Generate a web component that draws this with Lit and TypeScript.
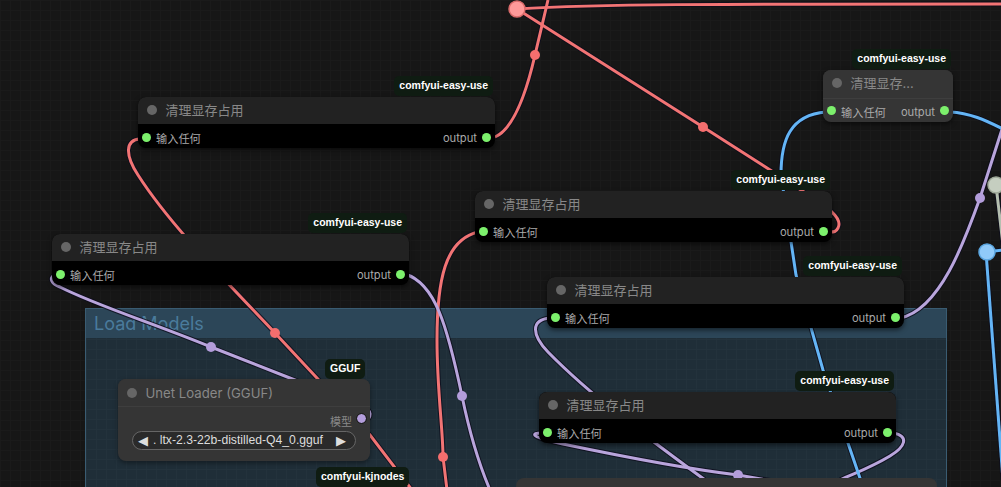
import { LitElement, html, css, svg } from "lit";
import { customElement } from "lit/decorators.js";

type NodeData = {
  x: number; y: number; w: number; title: string; badge: string;
  light?: boolean;
};

const clearTitle = "清理显存占用";
const nodes: NodeData[] = [
  { x: 138, y: 97, w: 357, title: clearTitle, badge: "comfyui-easy-use" },
  { x: 52, y: 234, w: 357, title: clearTitle, badge: "comfyui-easy-use" },
  { x: 475, y: 191, w: 357, title: clearTitle, badge: "comfyui-easy-use" },
  { x: 823, y: 70, w: 130, title: "清理显存...", badge: "comfyui-easy-use", light: true },
  { x: 547, y: 277, w: 357, title: clearTitle, badge: "comfyui-easy-use" },
  { x: 539, y: 392, w: 357, title: clearTitle, badge: "comfyui-easy-use" },
];

const RED = "#f27474";
const PURPLE = "#b9a5dc";
const BLUE = "#64b5f6";

const wires: { d: string; c: string }[] = [
  { c: RED, d: "M517 9 C 600 4, 700 4, 1001 4" },
  { c: RED, d: "M495 137 C 515 128, 527 90, 535 55 L 548 0" },
  { c: RED, d: "M517 9 L 703 127 L 792 184 C 815 200, 845 215, 838 228 C 836 232, 834 232, 830 232" },
  { c: RED, d: "M140 139 C 125 140, 125 155, 138 175 C 170 225, 225 280, 275 333 L 330 392 L 370 435 L 412 490" },
  { c: RED, d: "M478 232 C 445 240, 437 280, 437 340 C 437 390, 443 430, 443 457 L 447 490" },
  { c: PURPLE, d: "M55 275 C 48 278, 52 284, 60 287 C 95 305, 150 322, 211 347 L 300 382 C 340 398, 371 405, 370 414 C 370 418, 368 419, 366 419" },
  { c: PURPLE, d: "M405 274 C 435 283, 447 325, 462 396 C 470 435, 478 462, 490 490" },
  { c: PURPLE, d: "M550 318 C 530 320, 532 335, 548 352 C 590 395, 650 440, 712 485" },
  { c: PURPLE, d: "M542 433 C 530 433, 530 437, 563 444 C 620 456, 680 468, 738 475 L 790 484" },
  { c: PURPLE, d: "M893 433 C 910 436, 905 447, 890 456 C 870 468, 855 473, 840 480" },
  { c: PURPLE, d: "M900 318 C 940 310, 965 240, 980 198 L 1005 120" },
  { c: BLUE, d: "M826 112 C 790 115, 781 140, 781 175 L 796 275 L 823 370 L 862 484" },
  { c: BLUE, d: "M950 112 C 970 113, 985 120, 1003 129" },
  { c: BLUE, d: "M986 252 L 1003 480" },
  { c: BLUE, d: "M986 252 L 1003 250" },
  { c: "#b5bfb0", d: "M996 185 L 1003 245" },
];

const dots: { x: number; y: number; r: number; c: string; s?: string }[] = [
  { x: 535, y: 55, r: 5, c: "#f56e6e" },
  { x: 703, y: 127, r: 5, c: "#f56e6e" },
  { x: 275, y: 333, r: 5, c: "#f56e6e" },
  { x: 443, y: 457, r: 5, c: "#f56e6e" },
  { x: 211, y: 347, r: 5, c: "#b39ddb" },
  { x: 462, y: 396, r: 5, c: "#b39ddb" },
  { x: 980, y: 198, r: 5, c: "#b39ddb" },
  { x: 738, y: 475, r: 5, c: "#b39ddb" },
  { x: 517, y: 9, r: 8, c: "#ff9a9a", s: "#d96a6a" },
  { x: 987, y: 252, r: 8, c: "#90caf9", s: "#5ba6e0" },
  { x: 996, y: 185, r: 8, c: "#c5cec0", s: "#9ea898" },
];

@customElement("app-root")
export class AppRoot extends LitElement {
  static styles = css`
    :host { display: block; width: 1001px; height: 487px; overflow: hidden; }
    * { box-sizing: border-box; }
    .canvas {
      position: relative; width: 1001px; height: 487px; overflow: hidden;
      background-color: #161616;
      background-image:
        linear-gradient(#1a1a1a 1px, transparent 1px),
        linear-gradient(90deg, #1a1a1a 1px, transparent 1px),
        linear-gradient(#121212 1px, transparent 1px),
        linear-gradient(90deg, #121212 1px, transparent 1px);
      background-size: 10px 10px, 10px 10px, 70px 70px, 70px 70px;
      font-family: Inter, "Noto Sans CJK SC", sans-serif;
    }
    .group {
      position: absolute; left: 85px; top: 308px; width: 862px; height: 179px;
      border: 1px solid #3a5c72; border-bottom: 0;
      background-color: #1f2e38;
      background-image:
        linear-gradient(#23323c 1px, transparent 1px),
        linear-gradient(90deg, #23323c 1px, transparent 1px);
      background-size: 10px 10px;
    }
    .group-title {
      height: 29px; padding-left: 8px; background: #2c4658;
      color: #4a7b9c; font-size: 18px; line-height: 29px;
    }
    svg.wires { position: absolute; inset: 0; width: 1001px; height: 487px; }
    .node {
      position: absolute; display: flex; flex-direction: column;
      height: 51px; border-radius: 8px; background: #000;
      box-shadow: 0 2px 5px rgba(0,0,0,.55);
    }
    .node.light { background: #353535; height: 52px; }
    .head {
      display: flex; align-items: center; gap: 8.5px; height: 27px; padding: 0 0 3px 9px;
      background: #222; border-radius: 8px 8px 0 0;
      color: #888; font-size: 13px; flex: none;
    }
    .light .head { background: #353535; height: 29px; border-bottom: 1px solid #3e3e3e; }
    .lamp { width: 10px; height: 10px; border-radius: 50%; background: #666; flex: none; margin-top: 1px; }
    .row {
      display: flex; align-items: center; justify-content: space-between;
      flex: 1; padding: 2px 4px 0; color: #aaa; font-size: 11.2px;
    }
    .light .row { padding-top: 0; }
    .slot { display: flex; align-items: center; gap: 5px; }
    .slot > span:not(.pin) { padding-top: 2px; }
    .pin { width: 9px; height: 9px; border-radius: 50%; background: #7cf06c; flex: none; }
    .badge {
      position: absolute; bottom: calc(100% + 1px); right: 2px; height: 20px;
      padding: 0 5px; border-radius: 5px;
      background: #0f1c12; color: #fff;
      font: 700 10.5px/19px "Liberation Sans", sans-serif; white-space: nowrap;
    }
    .badge.free { bottom: auto; right: auto; }
    .gguf { left: 325px; top: 359px; }
    .kj { left: 316px; top: 467px; }
    .unet {
      position: absolute; left: 118px; top: 379px; width: 252px; height: 82px;
      display: flex; flex-direction: column;
      background: #353535; border-radius: 8px; box-shadow: 0 2px 5px rgba(0,0,0,.4);
    }
    .unet .head { background: #353535; height: 28px; border-bottom: 1px solid #3e3e3e; padding-bottom: 0; font-size: 13.2px; }
    .unet-out {
      display: flex; align-items: center; justify-content: flex-end; gap: 5px;
      height: 24px; padding: 0 4px 0 0; color: #888; font-size: 11px;
    }
    .unet-out > span:first-child { padding-top: 3px; }
    .unet-out .pin { background: #b39ddb; outline: 1px solid #1c1c1c; margin-bottom: 1px; }
    .combo {
      display: flex; align-items: center; justify-content: space-between;
      margin: 0 14px; height: 19px; padding: 0 9px 0 5px;
      border: 1px solid #666; border-radius: 10px; background: #2a2a2a;
      color: #ddd; font: 12.2px/17px "Liberation Sans", sans-serif;
    }
    .combo-text { margin-right: 8px; }
    .arrow { font-size: 13px; color: #ddd; font-family: "DejaVu Sans", sans-serif; }
    .clipped {
      position: absolute; left: 516px; top: 478px; width: 421px; height: 30px;
      display: flex; align-items: flex-start; padding: 7px 0 0 47px;
      background: #353535; border-radius: 8px; color: #888; font-size: 13px;
    }
  `;

  private renderNode(n: NodeData) {
    return html`
      <div class="node ${n.light ? "light" : ""}" style="left:${n.x}px;top:${n.y}px;width:${n.w}px">
        <div class="badge">${n.badge}</div>
        <div class="head"><span class="lamp"></span><span>${n.title}</span></div>
        <div class="row">
          <span class="slot"><span class="pin"></span><span>输入任何</span></span>
          <span class="slot"><span>output</span><span class="pin"></span></span>
        </div>
      </div>`;
  }

  render() {
    return html`
      <div class="canvas">
        <div class="group"><div class="group-title">Load Models</div></div>
        <svg class="wires" viewBox="0 0 1001 487" fill="none">
          ${wires.map((w) => svg`<path d=${w.d} stroke="#0c0c1c" stroke-opacity=".8" stroke-width="5"/>`)}
          ${wires.map((w) => svg`<path d=${w.d} stroke=${w.c} stroke-width="3"/>`)}
          ${dots.map((d) => svg`<circle cx=${d.x} cy=${d.y} r=${d.r} fill=${d.c} stroke=${d.s ?? "none"} stroke-width=${d.s ? 1.5 : 0}/>`)}
        </svg>
        ${nodes.map((n) => this.renderNode(n))}
        <div class="unet">
          <div class="head"><span class="lamp"></span><span>Unet Loader (GGUF)</span></div>
          <div class="unet-out"><span>模型</span><span class="pin"></span></div>
          <div class="combo"><span class="arrow">◀</span><span class="combo-text">. ltx-2.3-22b-distilled-Q4_0.gguf</span><span class="arrow">▶</span></div>
        </div>
        <div class="badge free gguf">GGUF</div>
        <div class="badge free kj">comfyui-kjnodes</div>
        <div class="clipped">CLIP加载器 (仅模型)</div>
      </div>
    `;
  }
}
